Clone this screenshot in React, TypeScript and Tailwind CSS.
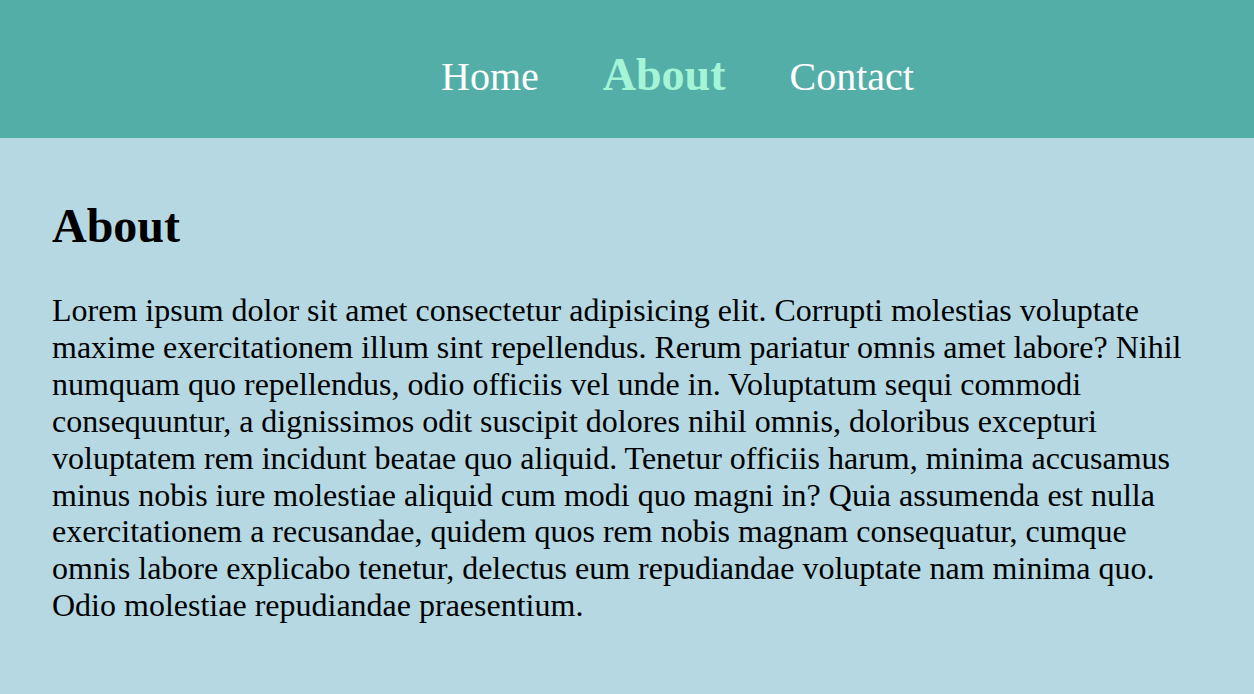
import React from "react";

export default function App() {
  const serif = { fontFamily: '"Liberation Serif", "Times New Roman", serif' };
  return (
    <div className="min-h-[694px] w-full bg-[#b5d8e3] text-black" style={serif}>
      <header className="h-[138px] bg-[#54aea8] pt-[48px]">
        <nav className="flex items-baseline pl-[441px] gap-[64px]">
          <a className="text-[40px] leading-[46px] text-white">Home</a>
          <a className="text-[46px] leading-[53px] font-bold text-[#a3f5d6]">About</a>
          <a className="text-[40px] leading-[46px] text-white">Contact</a>
        </nav>
      </header>
      <main className="pl-[52px] pr-[64px] pt-[60px]">
        <h2 className="text-[48px] font-bold leading-[55px]">About</h2>
        <p className="mt-[39px] text-[32px] leading-[36.9px]">
          Lorem ipsum dolor sit amet consectetur adipisicing elit. Corrupti molestias voluptate maxime exercitationem illum sint repellendus. Rerum pariatur omnis amet labore? Nihil numquam quo repellendus, odio officiis vel unde in. Voluptatum sequi commodi consequuntur, a dignissimos odit suscipit dolores nihil omnis, doloribus excepturi voluptatem rem incidunt beatae quo aliquid. Tenetur officiis harum, minima accusamus minus nobis iure molestiae aliquid cum modi quo magni in? Quia assumenda est nulla exercitationem a recusandae, quidem quos rem nobis magnam consequatur, cumque omnis labore explicabo tenetur, delectus eum repudiandae voluptate nam minima quo. Odio molestiae repudiandae praesentium.
        </p>
      </main>
    </div>
  );
}
